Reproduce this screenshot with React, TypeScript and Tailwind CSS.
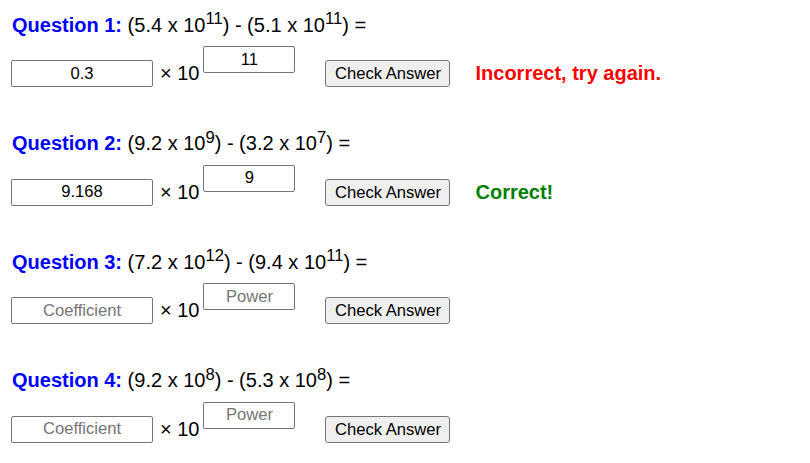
import { useState } from "react"

interface questionProps {
  id: number
  a: string
  ea: number
  b: string
  eb: number
  coef: string
  power: string
  result: "" | "wrong" | "right"
}

const initial: questionProps[] = [
  { id: 1, a: "5.4", ea: 11, b: "5.1", eb: 11, coef: "0.3", power: "11", result: "wrong" },
  { id: 2, a: "9.2", ea: 9, b: "3.2", eb: 7, coef: "9.168", power: "9", result: "right" },
  { id: 3, a: "7.2", ea: 12, b: "9.4", eb: 11, coef: "", power: "", result: "" },
  { id: 4, a: "9.2", ea: 8, b: "5.3", eb: 8, coef: "", power: "", result: "" },
]

export default function App() {
  const [questions, setQuestions] = useState<questionProps[]>(initial)

  function update(id: number, field: "coef" | "power", value: string) {
    setQuestions(all => all.map(q => (q.id === id ? { ...q, [field]: value } : q)))
  }

  function check(id: number) {
    setQuestions(all =>
      all.map(q => {
        if (q.id !== id) return q
        const answer = parseFloat(q.a) * Math.pow(10, q.ea) - parseFloat(q.b) * Math.pow(10, q.eb)
        const given = parseFloat(q.coef) * Math.pow(10, parseInt(q.power))
        const ok = Math.abs(answer - given) < Math.abs(answer) * 1e-9
        return { ...q, result: ok ? "right" : "wrong" }
      })
    )
  }

  return (
    <div className="w-full min-h-screen bg-white text-black font-['Liberation_Sans',Arial,sans-serif] pl-3 pt-[13.5px]">
      {questions.map(q => (
        <div key={q.id} className="h-[118.6px] last:h-auto flex flex-col">
          <div className="text-[20px] leading-[23px] h-[23px] shrink-0">
            <span className="font-bold text-[#0000ff]">Question {q.id}:</span>{" "}
            ({q.a} x 10<sup className="text-[0.83em] -top-[0.45em]">{q.ea}</sup>) - ({q.b} x 10<sup className="text-[0.83em] -top-[0.45em]">{q.eb}</sup>) =
          </div>
          <div className="flex items-end h-[41px] shrink-0 mt-[9.5px] -ml-px">
            <input
              value={q.coef}
              onChange={e => update(q.id, "coef", e.target.value)}
              placeholder="Coefficient"
              className="w-[142px] h-[27px] border border-[#767676] rounded-[2px] text-center text-[16.6px] text-black placeholder:text-[#757575] outline-none"
            />
            <span className="ml-[7px] text-[20px] leading-[23px] mb-[2px]">× 10</span>
            <input
              value={q.power}
              onChange={e => update(q.id, "power", e.target.value)}
              placeholder="Power"
              className="ml-[4px] mb-[14px] w-[92px] h-[27px] border border-[#767676] rounded-[2px] text-center text-[16.6px] text-black placeholder:text-[#757575] outline-none"
            />
            <button
              onClick={() => check(q.id)}
              className="ml-[30px] w-[125px] h-[27px] border border-[#767676] rounded-[3px] bg-[#efefef] text-[16.6px] leading-[25px] text-black cursor-pointer"
            >
              Check Answer
            </button>
            {q.result === "wrong" && (
              <span className="ml-[25px] mb-[2px] text-[20px] leading-[23px] font-bold text-[#ff0000]">Incorrect, try again.</span>
            )}
            {q.result === "right" && (
              <span className="ml-[25px] mb-[2px] text-[20px] leading-[23px] font-bold text-[#008000]">Correct!</span>
            )}
          </div>
        </div>
      ))}
    </div>
  )
}
